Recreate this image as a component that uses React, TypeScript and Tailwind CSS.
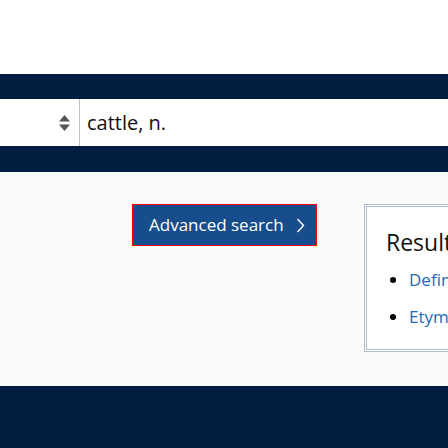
function SortArrows() {
  return (
    <svg width="11" height="16" viewBox="0 0 11 16" className="text-[#555]">
      <path d="M5.5 0 L11 6.5 L0 6.5 Z" fill="currentColor" />
      <path d="M5.5 16 L11 9.5 L0 9.5 Z" fill="currentColor" />
    </svg>
  );
}

function Chevron() {
  return (
    <svg width="9" height="15" viewBox="0 0 9 15" fill="none">
      <path d="M1.5 1 L7.5 7.5 L1.5 14" stroke="currentColor" strokeWidth="1.4" />
    </svg>
  );
}

function App() {
  return (
    <div className="w-[448px] h-[448px] overflow-hidden bg-[#fafafa] font-['Open_Sans',sans-serif]">
      <header className="h-[74px] bg-white" />
      <div className="h-[25px] bg-[#011e41]" />
      <div className="h-[47px] bg-white flex items-stretch">
        <div className="w-[79px] flex items-center justify-end pr-[9px]">
          <SortArrows />
        </div>
        <div className="w-px bg-[#b9c1cd]" />
        <div className="flex items-center pl-[7px] text-[20px] text-[#111]">
          cattle, n.
        </div>
      </div>
      <div className="h-[26px] bg-[#011e41]" />

      <main className="h-[214px] flex items-start pt-[32px]">
        <button className="shrink-0 whitespace-nowrap ml-[132px] w-[185px] h-[42px] border border-[#ff0000] bg-[#174d8c] text-white text-[17px] flex items-center pl-[16px] gap-[12px]">
          Advanced search
          <Chevron />
        </button>
        <section className="ml-[47px] w-[300px] h-[148px] border-[3px] border-double border-[#b0bccf] bg-white pl-[19px] pt-[20px] shrink-0">
          <h2 className="text-[23px] leading-[30px] text-[#111]">Results</h2>
          <ul className="list-disc pl-[23px] mt-[10px] text-[17px] text-[#1f68b8] marker:text-black">
            <li className="h-[37px] leading-[26px]">Definitions</li>
            <li className="h-[37px] leading-[26px]">Etymology</li>
          </ul>
        </section>
      </main>

      <footer className="h-[62px] bg-[#011e41] relative">
        <div className="absolute top-[59px] left-[-62px] text-white text-[15px] flex gap-[166px] whitespace-nowrap">
          <span>Accessibility</span>
          <span>Oxford University Press</span>
        </div>
      </footer>
    </div>
  );
}

export default App;
